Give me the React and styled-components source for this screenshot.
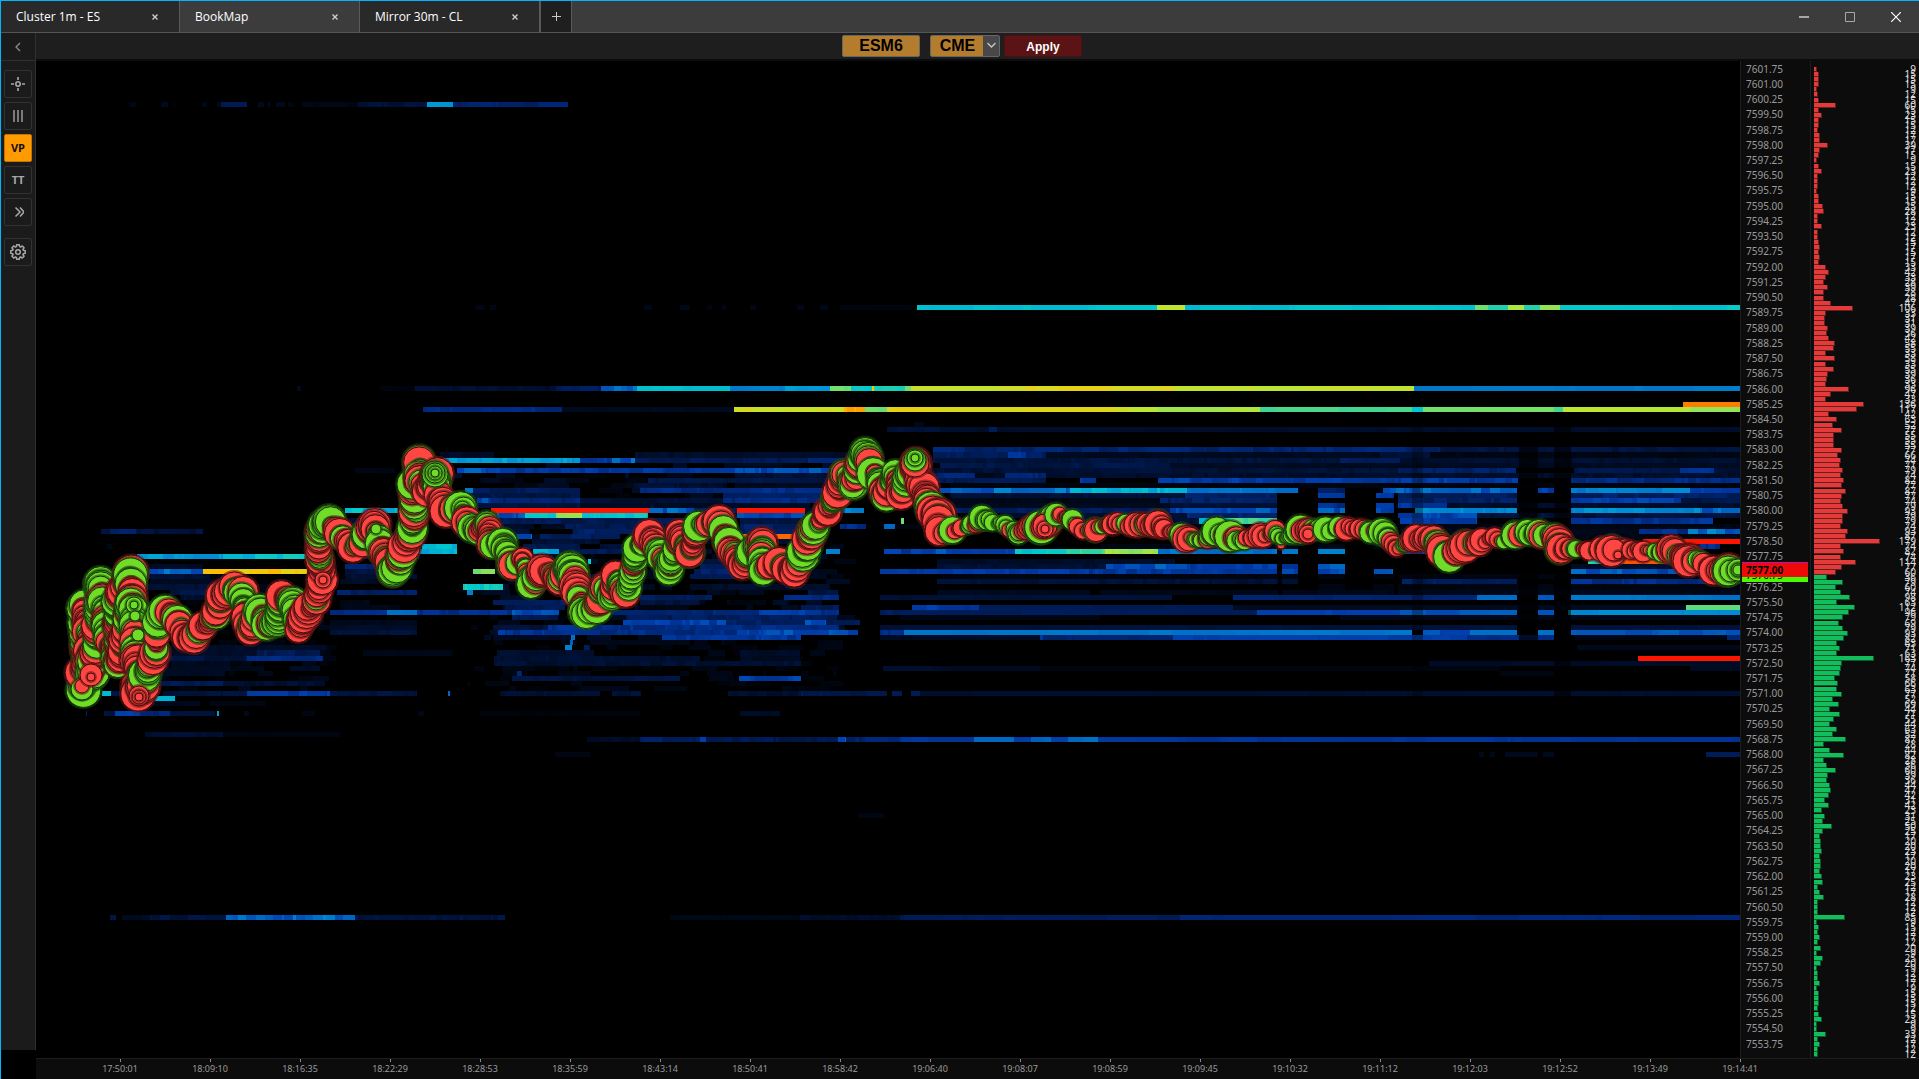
import React, { useMemo } from "react";
import styled, { createGlobalStyle } from "styled-components";

const GlobalStyle = createGlobalStyle`
  *, *::before, *::after { box-sizing: border-box; }
  body { margin: 0; background: #000; font-family: "Open Sans", "Noto Sans", sans-serif; }
  button, input, select { font: inherit; margin: 0; padding: 0; border: 0; }
`;

/* ---------- window frame ---------- */
const Window = styled.div`
  height: 100vh;
  display: flex;
  flex-direction: column;
  overflow: hidden;
  background: #000;
  border-top: 1px solid #00b7ff;
  border-left: 1px solid #00b7ff;
`;
const TitleBar = styled.header`
  flex: none;
  display: flex;
  height: 32px;
  background: #3c3c3c;
  border-bottom: 1px solid #555;
`;
const Tab = styled.div`
  display: flex;
  align-items: center;
  justify-content: space-between;
  width: 180px;
  padding: 0 16px 0 15px;
  border-right: 1px solid #5a5a5a;
  background: ${(p) => (p.$active ? "#3c3c3c" : "#292929")};
  &:first-child { width: 179px; }
`;
const TabName = styled.button`
  background: none;
  color: #fff;
  font-size: 12px;
  line-height: 16px;
`;
const TabClose = styled.button`
  display: grid;
  place-items: center;
  width: 16px;
  height: 16px;
  background: none;
  color: #d0d0d0;
`;
const AddTab = styled.button`
  display: grid;
  place-items: center;
  width: 32px;
  background: #1f1f1f;
  color: #c8c8c8;
  border-left: 1px solid #5a5a5a;
  border-right: 1px solid #5a5a5a;
`;
const WindowButtons = styled.div`
  display: flex;
  margin-left: auto;
`;
const WindowButton = styled.button`
  display: grid;
  place-items: center;
  width: 46px;
  background: none;
  color: ${(p) => (p.$bright ? "#fff" : "#a8a8a8")};
`;
const Body = styled.div`
  flex: 1;
  min-height: 0;
  display: flex;
`;

/* ---------- side bar ---------- */
const SideBar = styled.nav`
  flex: none;
  display: flex;
  flex-direction: column;
  width: 35px;
  margin-bottom: 29px;
  background: #1b1b1b;
  border-right: 1px solid #303030;
`;
const BackButton = styled.button`
  display: grid;
  place-items: center;
  height: 28px;
  background: none;
  color: #8c8c8c;
  border-bottom: 1px solid #303030;
`;
const Tools = styled.div`
  display: flex;
  flex-direction: column;
  gap: 4px;
  padding: 9px 3px;
`;
const Tool = styled.button`
  display: grid;
  place-items: center;
  height: 28px;
  margin-top: ${(p) => (p.$apart ? "8px" : "0")};
  border: 1px solid ${(p) => (p.$on ? "#c27600" : "#323232")};
  border-radius: 2px;
  background: ${(p) => (p.$on ? "#ff9b00" : "#1b1b1b")};
  color: ${(p) => (p.$on ? "#111" : "#a8a8a8")};
  font-size: 11px;
  font-weight: 700;
  line-height: 16px;
`;

/* ---------- instrument bar ---------- */
const Main = styled.main`
  flex: 1;
  min-width: 0;
  display: flex;
  flex-direction: column;
`;
const InstrumentBar = styled.form`
  flex: none;
  display: flex;
  align-items: center;
  justify-content: center;
  height: 28px;
  padding: 0 31px 1px 0;
  background: #1e1e1e;
  border-bottom: 2px solid #0c0c0c;
`;
const SymbolInput = styled.input`
  width: 78px;
  height: 22px;
  margin-right: 10px;
  border: 1px solid #666;
  border-radius: 2px;
  background: #b47d2e;
  color: #000;
  font: bold 16px/20px "Liberation Sans", Arial, sans-serif;
  text-align: center;
`;
const SelectBox = styled.span`
  position: relative;
  display: flex;
  margin-right: 4px;
`;
const ExchangeSelect = styled.select`
  appearance: none;
  width: 70px;
  height: 22px;
  padding-right: 15px;
  border: 1px solid #666;
  border-radius: 2px;
  background: linear-gradient(90deg, #b47d2e calc(100% - 16px), #484848 calc(100% - 16px));
  color: #000;
  font: bold 16px/20px "Liberation Sans", Arial, sans-serif;
  text-align-last: center;
`;
const SelectArrow = styled.svg`
  position: absolute;
  right: 4px;
  top: 7px;
  pointer-events: none;
`;
const ApplyButton = styled.button`
  width: 78px;
  height: 22px;
  padding-top: 2px;
  border: 1px solid #4a1012;
  border-radius: 2px;
  background: #5c1316;
  color: #fff;
  font: bold 12px/18px "Liberation Sans", Arial, sans-serif;
`;

/* ---------- chart ---------- */
const ChartRow = styled.div`
  flex: 1;
  min-height: 0;
  display: flex;
`;
const Plot = styled.svg`
  flex: 1;
  min-width: 0;
  height: 100%;
  display: block;
`;
const Ladder = styled.div`
  position: relative;
  flex: none;
  width: 70px;
  display: flex;
  flex-direction: column;
  padding-bottom: 7px;
  background: #0c0c0c;
  border-left: 1px solid #1d1d1d;
`;
const Price = styled.div`
  flex: 1;
  min-height: 0;
  display: flex;
  align-items: center;
  padding-left: 5px;
  color: #9a9a9a;
  font: 10px/14px "Noto Sans", sans-serif;
`;
const Quote = styled.div`
  position: absolute;
  left: 1px;
  right: 2px;
  height: 15px;
  padding-left: 4px;
  color: #000;
  font: ${(p) => (p.$last ? "bold" : "normal")} 10px/14px "Noto Sans", sans-serif;
  background: ${(p) => (p.$last ? "#ef0a0a" : "#49fb02")};
  border-top: 1px solid ${(p) => (p.$last ? "#c010b0" : "#49fb02")};
`;
const Profile = styled.div`
  flex: none;
  width: 109px;
  display: flex;
  flex-direction: column;
  padding: 6px 3px 1px;
  background: #0c0c0c;
  border-left: 1px solid #1d1d1d;
`;
const Level = styled.div`
  flex: 1;
  min-height: 0;
  display: flex;
  align-items: center;
  justify-content: space-between;
  color: #dcdcdc;
  font: 10px/5px "Noto Sans", sans-serif;
`;
const Bar = styled.span`
  height: 5px;
  background: ${(p) => (p.$ask ? "#e53a3a" : "#12bd5c")};
  border: solid ${(p) => (p.$ask ? "#641f1f" : "#0c5a2e")};
  border-width: 0 1px 1px 0;
`;
const TimeAxis = styled.footer`
  flex: none;
  display: flex;
  height: 21px;
  padding: 0 134px 0 39px;
  background: #0c0c0c;
  border-top: 1px solid #1d1d1d;
`;
const Time = styled.time`
  flex: 1;
  min-width: 0;
  display: flex;
  flex-direction: column;
  align-items: center;
  color: #9a9a9a;
  font: 9px/14px "Noto Sans", sans-serif;
  &::before { content: ""; width: 1px; height: 3px; background: #8c8c8c; }
`;

/* ---------- data ---------- */
const TIMES = "17:50:01 18:09:10 18:16:35 18:22:29 18:28:53 18:35:59 18:43:14 18:50:41 18:58:42 19:06:40 19:08:07 19:08:59 19:09:45 19:10:32 19:11:12 19:12:03 19:12:52 19:13:49 19:14:41".split(" ");
const PRICES = Array.from({ length: 65 }, (_, i) => (7601.75 - i * 0.75).toFixed(2));

const DEPTH = [
  3,5,5,5,3,4,5,22,5,8,5,5,4,6,6,14,6,5,3,5,8,4,4,4,3,5,5,9,10,4,4,8,4,4,5,6,5,6,5,12,15,12,10,14,10,10,17,39,12,11,
  11,14,13,15,21,20,12,21,12,20,14,13,12,35,17,12,50,43,15,23,19,28,20,20,20,28,24,27,26,29,27,30,28,32,28,27,29,34,29,29,
  27,34,32,66,27,30,27,42,28,22,13,29,22,27,36,23,41,35,29,25,29,34,30,23,26,23,60,28,27,26,21,24,23,28,19,25,16,26,20,16,
  23,19,32,10,16,30,10,13,22,14,13,16,17,15,11,15,8,11,9,18,9,6,7,7,8,6,7,7,6,8,9,4,6,10,4,4,4,31,3,5,
  4,6,4,7,3,9,7,3,4,4,6,3,5,5,5,4,5,8,3,3,12,4,6,4,4,
];
const FIRST_BID = 100;

/* level: [from, to, intensity] triples; level 0 is 7601.75, one level per tick */
const HEAT = {
  7: [129,136,5, 161,168,8, 173,175,5, 202,207,7, 217,221,8, 221,247,18, 258,264,8, 268,270,9, 276,285,7, 288,294,5, 302,358,5, 358,427,14, 427,453,56, 453,568,23],
  47: [475,485,5, 490,496,5, 644,652,6, 680,690,6, 707,712,4, 722,726,6, 750,756,5, 797,804,6, 820,828,5, 840,912,4, 917,1157,62, 1157,1185,83, 1185,1475,62, 1475,1488,74, 1488,1508,66, 1508,1524,80, 1524,1540,66, 1540,1560,78, 1560,1740,63],
  63: [297,301,8, 380,415,3, 415,556,12, 556,601,20, 601,637,48, 637,730,62, 730,785,52, 785,830,57, 830,851,74, 851,872,64, 872,874,88, 874,905,66, 905,911,75, 911,1026,84, 1026,1175,86, 1175,1414,83, 1414,1740,51],
  66: [1683,1740,95],
  67: [423,562,27, 562,734,8, 734,844,84, 844,865,92, 865,887,74, 887,939,87, 939,1130,85, 1130,1158,82, 1158,1260,80, 1260,1412,70, 1412,1423,63, 1423,1554,75, 1554,1563,70, 1563,1690,82, 1690,1740,78],
  70: [914,924,6],
  71: [887,940,14, 940,989,11, 989,997,20, 997,1740,11],
  75: [933,1440,24, 1440,1740,15],
  76: [440,494,10, 635,850,11, 933,1046,21, 1008,1026,36, 1046,1380,8, 1380,1430,14, 1430,1740,5],
  77: [437,580,57, 580,612,35, 612,635,46, 635,808,18, 808,850,24, 933,1340,14, 1340,1400,20, 1400,1740,12],
  78: [940,1170,16, 1170,1740,9],
  79: [355,395,5, 457,512,42, 512,720,34, 720,834,40, 933,1398,13, 1398,1516,23, 1574,1680,16, 1680,1714,32, 1714,1740,12],
  80: [455,462,12, 735,834,13, 930,975,24, 975,1005,8, 1005,1046,25, 1046,1740,11],
  81: [480,500,8, 648,834,16, 933,1046,18, 1080,1096,36, 1158,1518,36, 1571,1740,28],
  82: [634,723,12, 735,830,8, 950,1740,4],
  83: [465,473,50, 473,580,20, 640,826,28, 937,1070,48, 1070,1187,60, 1187,1298,50, 1318,1345,20, 1383,1517,44, 1538,1554,40, 1571,1690,52, 1690,1740,40],
  84: [467,580,16, 723,826,20, 950,1185,13, 1185,1277,23, 1318,1345,35, 1376,1394,38, 1398,1517,20, 1571,1740,22],
  85: [477,490,42, 490,580,24, 580,723,12, 723,826,27, 940,1160,6, 1160,1277,22, 1398,1517,22, 1571,1681,37, 1681,1740,16],
  86: [475,580,15, 580,810,9, 950,1170,8, 1170,1277,14, 1318,1345,30, 1376,1394,36, 1396,1447,35, 1447,1740,11],
  87: [345,398,61, 491,649,100, 649,694,44, 694,737,20, 737,805,100, 840,864,48, 950,1170,20, 1170,1277,42, 1318,1345,42, 1376,1394,38, 1415,1517,54, 1571,1700,54, 1700,1740,47],
  88: [493,525,42, 525,556,62, 556,582,77, 582,648,62, 737,805,38, 1000,1187,12, 1187,1277,24, 1398,1477,38, 1477,1740,14],
  89: [345,390,12, 490,684,18, 740,805,15, 901,904,72, 1080,1199,12, 1199,1230,62, 1230,1277,70, 1400,1477,38, 1571,1713,32],
  90: [490,534,10, 565,666,18, 740,801,22, 840,866,30, 884,895,46, 895,1300,4, 1400,1740,5],
  91: [101,203,14, 110,136,24, 500,530,13, 573,637,22, 637,670,12, 740,795,20, 1400,1639,7, 1639,1688,30, 1688,1740,48],
  92: [517,532,45, 540,620,20, 737,798,96, 1400,1740,5],
  93: [345,380,15, 532,600,12, 740,795,12, 1643,1740,100],
  94: [107,112,5, 422,457,62, 523,580,18, 600,680,12, 1100,1600,5, 1640,1700,15, 1700,1720,30],
  95: [417,457,60, 533,559,60, 559,630,18, 826,840,46, 884,936,36, 936,1015,40, 1015,1067,64, 1067,1105,69, 1105,1158,78, 1158,1277,50, 1282,1298,50, 1318,1345,52, 1398,1440,40],
  96: [137,223,57, 223,307,62, 345,420,16, 500,560,10],
  97: [530,550,10, 588,591,62, 700,780,13, 937,1175,10, 1588,1623,68, 1623,1673,97],
  98: [147,203,9, 345,375,22, 520,560,10, 700,787,20, 937,1106,12, 1106,1190,44, 1190,1277,36, 1282,1298,38, 1318,1345,42, 1571,1700,10],
  99: [147,203,47, 203,307,89, 345,410,15, 473,495,74, 520,560,15, 694,787,22, 880,1277,34, 1282,1298,40, 1318,1345,42, 1374,1393,42, 1571,1693,43, 1693,1740,30],
  100: [147,210,12, 345,417,12, 560,620,14, 690,787,18, 940,1740,4],
  101: [150,250,8, 340,400,10, 560,640,12, 937,1300,13, 1402,1517,20, 1571,1740,30],
  102: [140,210,12, 463,503,64, 690,830,11, 1300,1740,4],
  103: [170,225,15, 337,417,22, 467,473,55, 808,838,15, 937,1090,8, 1100,1740,6],
  104: [180,230,12, 500,530,12, 637,712,20, 784,839,28, 880,1172,13, 1233,1477,24, 1477,1517,46, 1538,1554,46, 1571,1740,50],
  105: [493,573,20, 340,370,6, 640,700,14],
  106: [340,400,6, 505,565,18, 801,839,20, 912,940,34, 927,937,42, 940,979,32, 979,1233,19, 1233,1686,8, 1686,1740,72],
  107: [330,387,28, 387,417,49, 417,512,30, 512,559,44, 600,759,25, 759,805,38, 805,839,30, 880,1257,20, 1257,1400,38, 1400,1517,44, 1538,1554,42, 1568,1571,64, 1571,1740,54],
  108: [512,558,18, 626,837,20, 900,1100,5, 1340,1740,6],
  109: [330,417,7, 623,726,38, 726,805,22, 805,826,40, 826,860,18],
  110: [330,417,10, 493,548,14, 548,620,30, 620,723,30, 723,839,28, 880,1517,14, 1571,1740,14],
  111: [330,417,14, 498,559,33, 559,737,29, 737,858,40, 880,904,28, 904,1412,50, 1423,1440,46, 1440,1470,38, 1470,1517,50, 1538,1554,50, 1571,1740,44],
  112: [493,560,8, 571,575,50, 662,801,34, 880,1040,9, 1040,1043,36, 1043,1173,24, 1173,1467,38, 1467,1554,28, 1575,1727,5, 1727,1740,24],
  113: [570,573,48, 590,690,6],
  114: [163,327,10, 565,572,52, 584,590,20, 1577,1740,7],
  115: [165,257,10, 257,320,18, 363,453,6, 497,594,12, 740,800,10],
  116: [167,247,15, 247,323,28, 494,700,12, 740,800,9, 1638,1740,100],
  117: [170,230,8, 494,801,12, 1429,1740,10],
  118: [157,230,9, 290,320,10, 883,940,11, 940,1040,9, 1040,1500,4, 1690,1740,9],
  119: [160,225,10, 517,522,24, 1500,1560,4],
  120: [512,540,14, 540,680,15, 739,801,36],
  121: [155,223,18, 223,325,12],
  122: [580,620,6],
  123: [102,111,62, 111,120,15, 163,247,14, 247,330,34, 330,417,14, 448,450,46, 500,600,13, 612,641,14, 728,801,12, 801,887,18, 892,902,18, 911,920,20, 920,1740,12],
  124: [147,175,60],
  125: [126,200,7, 210,265,5],
  127: [86,87,20, 104,115,15, 115,140,42, 140,170,24, 170,215,14, 217,219,58, 244,249,7, 302,315,5, 418,424,6, 480,640,3, 740,780,10],
  131: [145,223,12, 223,340,4],
  132: [587,640,10, 640,700,22, 700,706,40, 706,830,18, 830,838,20, 838,846,46, 846,900,24, 900,974,34, 974,1014,48, 1014,1031,36, 1031,1051,46, 1051,1068,36, 1068,1098,48, 1098,1740,33],
  135: [555,590,5, 1479,1484,7, 1490,1495,7, 1505,1538,8, 1543,1554,8, 1706,1740,20],
  147: [858,884,5],
  167: [110,116,16, 122,150,9, 150,226,15, 226,355,48, 355,505,15, 670,800,6, 800,900,11, 900,1180,20, 1180,1740,26],
};

/* columns where the book was thin: [x, width, first level, last level, opacity] */
const GAPS = [
  [1278, 4, 84, 104, 0.9], [1298, 20, 83, 103, 0.9], [1345, 28, 83, 103, 0.92], [1394, 4, 84, 104, 0.9],
  [1412, 11, 71, 124, 0.3], [1519, 19, 75, 113, 0.7], [1554, 17, 71, 124, 0.65],
];

/* price path: [x, y, radius] */
const PATH = [
  [82,692,16],[82,672,15],[85,640,15],[83,606,14],[90,650,15],[92,676,15],[97,630,14],[101,583,15],[108,640,14],[117,662,14],[118,600,14],[130,573,16],
  [132,605,15],[123,640,14],[119,664,13],[132,600,14],[134,625,14],[137,660,15],[139,694,16],[146,674,15],[155,655,14],[158,620,14],[166,610,15],[176,620,14],[186,638,13],[193,638,14],[203,625,13],[215,617,13],[222,595,14],
  [233,588,14],[242,592,14],[246,618,13],[250,631,13],[260,610,15],[267,625,14],[277,622,14],[282,597,14],[293,603,14],[299,628,12],[306,612,15],[316,600,13],[322,578,14],[319,560,13],[318,535,13],
  [328,520,15],[340,535,14],[352,548,14],[362,543,13],[374,524,15],[383,550,13],[392,572,14],[398,566,14],[405,545,15],[412,530,14],[415,512,14],[413,485,14],[420,460,15],[419,480,14],[426,492,14],[436,474,15],
  [438,495,13],[447,512,15],[462,507,15],[466,522,14],[478,532,13],[487,522,11],[492,545,13],[503,542,14],[512,566,13],[522,557,10],[532,586,13],[542,570,14],[560,580,13],[571,566,15],[576,586,15],[583,614,14],
  [596,608,14],[604,585,13],[612,598,13],[616,576,13],[625,594,13],[634,572,12],[636,548,13],[650,536,14],[660,554,13],[669,570,13],[680,534,13],[690,553,14],[699,526,14],[719,520,15],[728,544,14],
  [742,566,13],[751,552,13],[762,544,14],[763,570,13],[778,564,14],[795,572,13],[803,556,15],[812,530,14],[826,512,13],[838,494,14],[843,472,13],[852,486,14],[864,452,14],[874,472,15],[886,497,14],
  [894,474,12],[901,495,14],[915,463,14],[922,487,14],[930,508,15],[938,514,16],[940,532,14],[953,532,13],[961,527,8],[972,525,8],[982,519,12],[993,522,8],[1005,525,9],[1017,534,10],[1027,528,10],
  [1042,528,16],[1055,513,11],[1072,520,10],[1083,530,8],[1095,530,11],[1113,523,10],[1127,525,9],[1137,525,12],[1158,524,13],[1170,532,7],[1185,537,13],[1202,540,7],[1217,533,14],[1229,538,15],[1244,540,9],
  [1260,537,12],[1275,532,10],[1282,540,6],[1300,529,14],[1327,530,12],[1346,527,11],[1365,530,9],[1383,533,13],[1397,549,8],[1417,538,13],[1433,539,13],[1441,550,15],[1449,556,15],[1465,545,15],[1480,543,12],
  [1494,538,9],[1504,540,7],[1515,534,13],[1540,533,13],[1558,538,14],[1560,550,14],[1574,548,8],[1590,550,9],[1612,550,15],[1630,549,9],[1643,550,10],[1656,552,8],[1670,550,14],[1690,560,15],[1704,562,10],[1715,570,14],[1728,571,15],[1738,570,8],
];

/* single trades along the path: [x, y, radius, isBuy] */
const TRADES = [
  [82,689,11,1],[82,686,7,0],[91,675,11,0],[91,677,4,0],[134,605,8,1],[134,605,4,1],[135,616,5,1],[138,635,6,1],[139,696,10,0],[139,697,7,0],[139,697,4,0],
  [323,580,8,0],[323,580,4,0],[376,529,5,1],[435,474,13,1],[435,473,10,1],[435,473,7,1],[435,473,4,1],[915,463,14,0],[915,460,11,1],[915,458,8,1],[915,458,4,1],
  [1040,529,15,1],[1045,526,12,0],[1045,529,8,0],[1045,529,4,0],[1095,530,12,1],[1095,530,6,0],[1158,523,13,1],[1158,526,9,1],[1217,533,14,0],[1229,539,13,0],[1281,545,4,0],
  [1308,534,9,0],[1308,534,5,0],[1449,556,14,0],[1465,545,15,1],[1515,534,13,1],[1560,549,15,1],[1560,549,11,1],[1560,549,7,0],[1612,550,15,1],[1614,550,11,0],[1618,555,4,0],[1690,559,15,0],[1690,563,12,1],
  [1728,571,15,1],[1731,571,11,1],[1738,570,11,1],[1738,570,7,1],[1738,570,5,1],
];

const STOPS = [
  [0, 0, 0, 0], [10, 0, 12, 38], [20, 0, 28, 88], [30, 0, 46, 138], [40, 0, 66, 178], [50, 0, 116, 200], [57, 0, 154, 214],
  [63, 0, 200, 206], [70, 70, 214, 140], [77, 140, 226, 92], [82, 184, 230, 52], [86, 224, 214, 24], [90, 255, 190, 0], [95, 255, 124, 0], [100, 255, 20, 0],
];
function heatColor(v) {
  const k = Math.max(1, STOPS.findIndex((s) => s[0] >= v));
  const a = STOPS[k - 1];
  const b = STOPS[k];
  const t = (v - a[0]) / (b[0] - a[0]);
  const c = [1, 2, 3].map((n) => Math.round(a[n] + (b[n] - a[n]) * t));
  return `rgb(${c.join(",")})`;
}
function randomFrom(seed) {
  let s = seed;
  return () => {
    s = (s * 1664525 + 1013904223) % 4294967296;
    return s / 4294967296;
  };
}
const levelTop = (i) => Math.round(66.5 + 5.078 * i);
const levelHeight = (i) => levelTop(i + 1) - levelTop(i);

function buildCells() {
  const rand = randomFrom(77);
  const cells = [];
  for (let i = 78; i < 123; i++) {
    let x = 465 + rand() * 40;
    while (x < 835) {
      const w = 2 + Math.floor(rand() * 26);
      if (rand() < 0.4) cells.push([Math.round(x), i, w, 2 + rand() * (i < 113 ? 9 : 4)]);
      x += w;
    }
    x = 150 + rand() * 30;
    while (i > 99 && x < 325) {
      const w = 2 + Math.floor(rand() * 18);
      if (rand() < 0.4) cells.push([Math.round(x), i, w, 2 + rand() * 5]);
      x += w;
    }
  }
  Object.entries(HEAT).forEach(([level, runs]) => {
    for (let k = 0; k < runs.length; k += 3) {
      const [from, to, v] = runs.slice(k, k + 3);
      const calm = +level < 72 || +level > 103;
      let x = from;
      while (x < to) {
        const w = Math.min(to - x, 2 + Math.floor(rand() * rand() * (x > 900 && calm ? 90 : 24)));
        const spread = v > 94 ? 0 : v > 48 ? (calm ? 1 : 3) : v * (calm && x > 900 ? 0.06 : 0.16);
        cells.push([x, +level, w, Math.min(100, Math.max(0, v + (rand() - 0.5) * 2 * spread))]);
        x += w;
      }
    }
  });
  return cells;
}

function buildBubbles() {
  const rand = randomFrom(4021);
  const list = [];
  let buy = true;
  for (let k = 1; k < PATH.length; k++) {
    const [x0, y0, r0] = PATH[k - 1];
    const [x1, y1, r1] = PATH[k];
    const grow = x0 < 940 ? 1.08 : 1.04;
    const steps = Math.max(1, Math.round(Math.hypot(x1 - x0, y1 - y0) / (x0 < 940 ? 2.2 : 3)));
    for (let s = 0; s < steps; s++) {
      const t = s / steps;
      if (rand() < 0.6) buy = rand() < 0.44;
      const size = s === 0 ? 1 : 0.45 + 0.55 * rand();
      list.push([
        x0 + (x1 - x0) * t + (rand() - 0.5) * 3,
        y0 + (y1 - y0) * t + (rand() - 0.5) * 4,
        (r0 + (r1 - r0) * t) * size * grow,
        buy,
      ]);
    }
    TRADES.filter((d) => d[0] > x0 && d[0] <= x1 && x0 > 940).forEach((d) => list.push(d));
  }
  return list.concat(TRADES.filter((d) => d[0] < 940 || d[0] > 1725));
}

function Bubble({ at: [x, y, r, buy] }) {
  return (
    <>
      <circle cx={x} cy={y} r={r + 1.9} fill={buy ? "#1c4a0c" : "#641616"} fillOpacity="0.55" />
      <circle cx={x} cy={y} r={r} fill={buy ? "#70dc28" : "#ff4642"} stroke={buy ? "#10300a" : "#3c0a0a"} strokeWidth="1" />
    </>
  );
}

function HeatPlot() {
  const cells = useMemo(buildCells, []);
  const bubbles = useMemo(buildBubbles, []);
  return (
    <Plot viewBox="36 61 1704 997" preserveAspectRatio="none" role="img" aria-label="Order book heat map">
      <g shapeRendering="crispEdges">
        {cells.map(([x, i, w, v], k) => (
          <rect key={k} x={x} y={levelTop(i)} width={w} height={levelHeight(i)} fill={heatColor(v)} />
        ))}
        {GAPS.map(([x, w, a, b, o]) => (
          <rect key={x} x={x} y={levelTop(a)} width={w} height={levelTop(b) - levelTop(a)} fill="#000" opacity={o} />
        ))}
      </g>
      {bubbles.map((b, k) => (
        <Bubble key={k} at={b} />
      ))}
    </Plot>
  );
}

const Icon = ({ size = 16, children, width = 1 }) => (
  <svg width={size} height={size} viewBox={`0 0 ${size} ${size}`} fill="none" stroke="currentColor" strokeWidth={width} aria-hidden="true">
    {children}
  </svg>
);

const gearPath = (() => {
  const pts = [];
  for (let k = 0; k < 8; k++) {
    [[-0.3, 5.6], [-0.17, 7.4], [0.17, 7.4], [0.3, 5.6]].forEach(([d, r]) => {
      const a = (k * Math.PI) / 4 + d;
      pts.push(`${(8 + r * Math.sin(a)).toFixed(2)} ${(8 - r * Math.cos(a)).toFixed(2)}`);
    });
  }
  return `M${pts.join("L")}Z`;
})();

const TABS = ["Cluster 1m - ES", "BookMap", "Mirror 30m - CL"];

export default function App() {
  return (
    <Window>
      <GlobalStyle />
      <TitleBar>
        {TABS.map((name) => (
          <Tab key={name} $active={name === "BookMap"}>
            <TabName type="button">{name}</TabName>
            <TabClose type="button" aria-label={`Close ${name}`}>
              <Icon size={8} width={1.3}><path d="M1.5 1.5l5 5M6.5 1.5l-5 5" /></Icon>
            </TabClose>
          </Tab>
        ))}
        <AddTab type="button" aria-label="Add tab">
          <Icon size={9}><path d="M4.5 0v9M0 4.5h9" /></Icon>
        </AddTab>
        <WindowButtons>
          <WindowButton type="button" aria-label="Minimize">
            <Icon size={10} width={2}><path d="M0 5h10" /></Icon>
          </WindowButton>
          <WindowButton type="button" aria-label="Maximize">
            <Icon size={10}><path d="M.5.5h9v9h-9z" /></Icon>
          </WindowButton>
          <WindowButton type="button" aria-label="Close" $bright>
            <Icon size={10} width={1.2}><path d="M0 0l10 10M10 0L0 10" /></Icon>
          </WindowButton>
        </WindowButtons>
      </TitleBar>
      <Body>
        <SideBar>
          <BackButton type="button" aria-label="Back">
            <Icon size={10} width={1.3}><path d="M7 1L3 5l4 4" /></Icon>
          </BackButton>
          <Tools>
            <Tool type="button" aria-label="Center">
              <Icon size={14} width={1.6}><circle cx="7" cy="7" r="2.2" /><path d="M7 0v3M7 11v3M0 7h3M11 7h3" /></Icon>
            </Tool>
            <Tool type="button" aria-label="Columns">
              <Icon size={12} width={1.6}><path d="M2 0v12M6 0v12M10 0v12" opacity="0.85" /></Icon>
            </Tool>
            <Tool type="button" $on>VP</Tool>
            <Tool type="button">TT</Tool>
            <Tool type="button" aria-label="More">
              <Icon size={12} width={1.5}><path d="M3.5 1.5L8 6l-4.500 4.500M8 1.500L12 6 8 10.500" /></Icon>
            </Tool>
            <Tool type="button" aria-label="Settings" $apart>
              <Icon width={1.5}><path d={gearPath} strokeLinejoin="round" /><circle cx="8" cy="8" r="2.3" /></Icon>
            </Tool>
          </Tools>
        </SideBar>
        <Main>
          <InstrumentBar onSubmit={(e) => e.preventDefault()}>
            <SymbolInput aria-label="Symbol" defaultValue="ESM6" />
            <SelectBox>
              <ExchangeSelect aria-label="Exchange" defaultValue="CME">
                <option>CME</option>
              </ExchangeSelect>
              <SelectArrow width="9" height="7" viewBox="0 0 9 7" fill="none" stroke="#c8c8c8" strokeWidth="1.3">
                <path d="M.5 1l4 4 4-4" />
              </SelectArrow>
            </SelectBox>
            <ApplyButton type="submit">Apply</ApplyButton>
          </InstrumentBar>
          <ChartRow>
            <HeatPlot />
            <Ladder>
              {PRICES.map((p) => (
                <Price key={p}>{p}</Price>
              ))}
              <Quote style={{ top: `${(506 / 997) * 100}%` }}>7576.75</Quote>
              <Quote $last style={{ top: `${(501 / 997) * 100}%` }}>7577.00</Quote>
            </Ladder>
            <Profile>
              {DEPTH.map((w, i) => (
                <Level key={i}>
                  <Bar $ask={i < FIRST_BID} style={{ width: w }} />
                  {Math.round(w * 2.7 + 1)}
                </Level>
              ))}
            </Profile>
          </ChartRow>
          <TimeAxis>
            {TIMES.map((t) => (
              <Time key={t}>{t}</Time>
            ))}
          </TimeAxis>
        </Main>
      </Body>
    </Window>
  );
}
